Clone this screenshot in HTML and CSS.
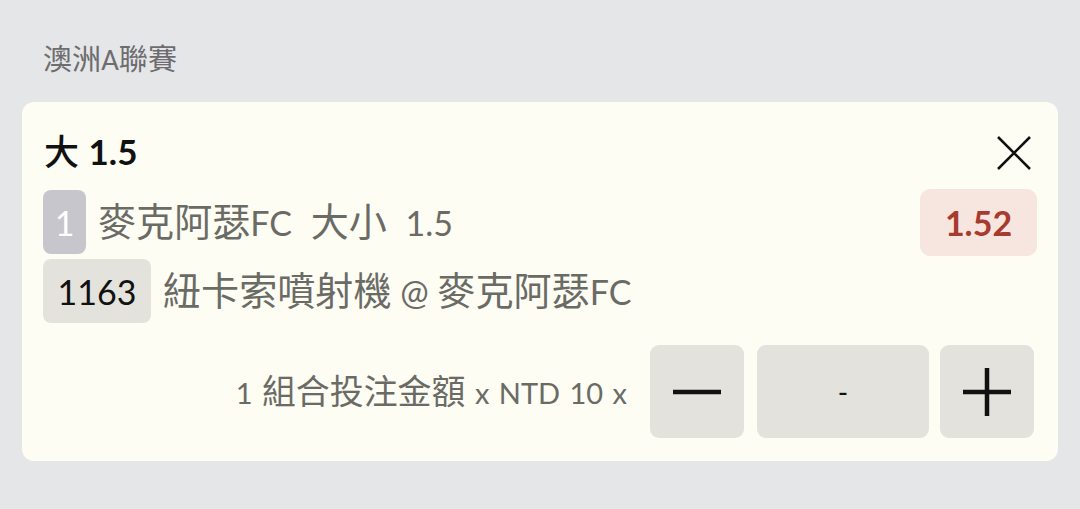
FILE: index.html
```html
<!DOCTYPE html>
<html lang="zh-Hant">
<head>
<meta charset="utf-8">
<link rel="stylesheet" href="styles.css">
</head>
<body>
<div class="league"><span class="cjk">澳洲</span>A<span class="cjk">聯賽</span></div>
<div class="card">
  <div class="title-row">
    <div class="title"><span class="cjk">大</span> 1.5</div>
    <button class="close" aria-label="close">
      <svg width="34" height="34" viewBox="0 0 34 34"><path d="M1 1 L33 33 M33 1 L1 33" stroke="#111" stroke-width="2.6" fill="none"/></svg>
    </button>
  </div>
  <div class="row row1">
    <span class="badge badge-leg">1</span>
    <span class="text"><span class="cjk">麥克阿瑟</span>FC <span class="cjk">大小</span> 1.5</span>
    <span class="odds">1.52</span>
  </div>
  <div class="row row2">
    <span class="badge badge-id">1163</span>
    <span class="text"><span class="cjk">紐卡索噴射機</span> @ <span class="cjk">麥克阿瑟</span>FC</span>
  </div>
  <div class="stake-row">
    <span class="stake-text">1 <span class="cjk">組合投注金額</span> x NTD 10 x</span>
    <button class="btn btn-sq" aria-label="minus">
      <svg width="50" height="50" viewBox="0 0 50 50"><path d="M1 25 H49" stroke="#111" stroke-width="4.5"/></svg>
    </button>
    <div class="btn btn-mid">-</div>
    <button class="btn btn-sq" aria-label="plus">
      <svg width="50" height="50" viewBox="0 0 50 50"><path d="M1 25 H49 M25 1 V49" stroke="#111" stroke-width="4.5"/></svg>
    </button>
  </div>
</div>
</body>
</html>
```
FILE: styles.css
```css
* { box-sizing: border-box; }
html, body { margin: 0; padding: 0; }
body {
  background: #e5e6e8;
  font-family: Lato, "Noto Sans CJK TC", sans-serif;
  width: 1080px;
  height: 509px;
  overflow: hidden;
}
.cjk {
  font-family: "Noto Sans CJK TC", sans-serif;
  font-size: 1.12em;
  line-height: 1;
}
.league {
  padding: 40px 0 0 43px;
  height: 80px;
  line-height: 40px;
  font-size: 26px;
  color: #6d6d6f;
}
.card {
  margin: 22px 22px 0 22px;
  height: 359px;
  background: #fdfdf4;
  border-radius: 12px;
  padding: 26px 21px 0 21px;
}
.title-row {
  display: flex;
  align-items: center;
  justify-content: space-between;
  height: 46px;
}
.title {
  font-size: 35px;
  font-weight: 700;
  color: #111;
  padding-left: 1px;
  word-spacing: 1px;
}
.title .cjk { font-size: 1em; font-weight: 500; }
.close {
  border: 0;
  background: none;
  padding: 0;
  margin-right: 6px;
  margin-top: 4px;
  width: 34px;
  height: 34px;
  display: flex;
}
.row {
  display: flex;
  align-items: center;
}
.row1 { margin-top: 14px; height: 68px; }
.row2 { margin-top: 3px; height: 64px; }
.badge {
  height: 64px;
  border-radius: 8px;
  display: flex;
  align-items: center;
  justify-content: center;
  font-size: 34px;
}
.badge-leg {
  width: 43px;
  background: #c6c6cc;
  color: #fff;
}
.badge-id {
  width: 108px;
  background: #e3e2dc;
  color: #111;
}
.text {
  font-size: 34px;
  color: #6b6b66;
  margin-left: 12px;
  word-spacing: 0;
  flex: 1;
}
.row1 .text { word-spacing: 10px; }
.odds {
  width: 117px;
  height: 67px;
  border-radius: 10px;
  background: #f6e6df;
  color: #a83a2e;
  font-weight: 700;
  font-size: 34px;
  display: flex;
  align-items: center;
  justify-content: center;
}
.stake-row {
  margin-top: 22px;
  display: flex;
  justify-content: flex-end;
  align-items: center;
  padding-right: 3px;
}
.stake-text {
  font-size: 29px;
  color: #6b6b66;
  margin-right: 23px;
  word-spacing: 2px;
}
.stake-text .cjk { font-size: 1.17em; }
.btn {
  border: 0;
  padding: 0;
  height: 93px;
  background: #e3e2dc;
  border-radius: 9px;
  display: flex;
  align-items: center;
  justify-content: center;
  font-family: Lato, sans-serif;
}
.btn-sq { width: 94px; }
.btn-mid {
  width: 172px;
  margin: 0 11px 0 13px;
  font-size: 28px;
  color: #111;
}
```
